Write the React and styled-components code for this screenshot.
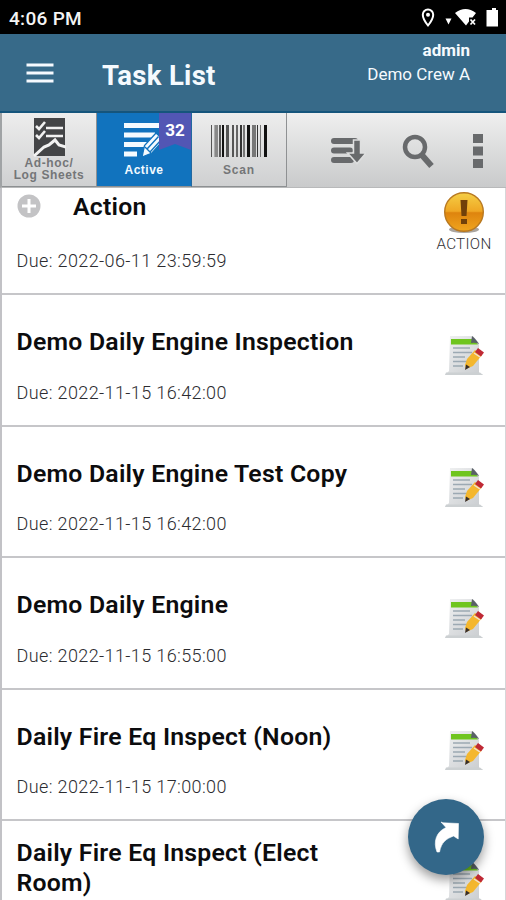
import React from "react";
import styled, { createGlobalStyle } from "styled-components";

const GlobalStyle = createGlobalStyle`
  *, *::before, *::after { box-sizing: border-box; }
  html, body { margin: 0; padding: 0; height: 100%; overflow: hidden; background: #fff; }
  body { font-family: Roboto, "Liberation Sans", sans-serif; color: #0c0c0e; }
  svg { display: block; flex: none; }
`;

const Screen = styled.div`
  width: 506px;
  height: 900px;
  display: flex;
  flex-direction: column;
  overflow: hidden;
  position: relative;
`;

const StatusBar = styled.div`
  height: 34px;
  flex: none;
  display: flex;
  align-items: center;
  justify-content: space-between;
  padding: 2px 7px 0 9px;
  background: #000;
  color: #f4f4f4;
`;

const Clock = styled.span`
  font-size: 19px;
  font-weight: 500;
  line-height: 24px;
  letter-spacing: 0.3px;
  padding-top: 1px;
`;

const Header = styled.header`
  height: 79px;
  flex: none;
  display: flex;
  background: #376a89;
  border-bottom: 2px solid #15557c;
  color: #f5fafe;
  padding: 0 36px 0 26px;
`;

const MenuButton = styled.div`
  display: flex;
  align-items: center;
  width: 76px;
`;

const PageTitle = styled.h1`
  margin: 0;
  padding-top: 26px;
  font-size: 27.5px;
  line-height: 32px;
  font-weight: 700;
  letter-spacing: 0.3px;
  flex: 1;
`;

const Account = styled.div`
  text-align: right;
  padding-top: 5px;
  font-size: 17px;
  line-height: 23.5px;
`;

const UserName = styled.div`
  font-weight: 700;
`;

const Toolbar = styled.nav`
  height: 75px;
  flex: none;
  display: flex;
  background: linear-gradient(#efefef, #c9cacb);
  border-bottom: 1px solid #b8b9ba;
  border-left: 2px solid #a0a3a5;
`;

const Tab = styled.div`
  width: 95px;
  position: relative;
  display: flex;
  flex-direction: column;
  align-items: center;
  padding-top: ${(p) => p.$top}px;
  border-right: 1px solid ${(p) => (p.$active ? "#2268a0" : "#8f9193")};
  border-bottom: 1px solid #8d9092;
  background: ${(p) => (p.$active ? "#1173be" : "linear-gradient(#ededed, #cfd0d1)")};
  color: ${(p) => (p.$active ? "#f2faff" : "#747678")};
`;

const TabLabel = styled.div`
  margin-top: ${(p) => p.$gap}px;
  font-family: "Liberation Sans", Arial, sans-serif;
  font-weight: 700;
  font-size: 12px;
  line-height: 11.5px;
  letter-spacing: ${(p) => p.$spacing}px;
  text-align: center;
  white-space: pre;
`;

const Badge = styled.div`
  position: absolute;
  top: 0;
  right: 0;
  width: 32px;
  height: 37px;
  padding-top: 7px;
  background: #5256b4;
  clip-path: polygon(0 0, 100% 0, 100% 100%, 50% 84%, 0 100%);
  color: #fff;
  font-size: 17px;
  line-height: 20px;
  font-weight: 700;
  text-align: center;
`;

const Tools = styled.div`
  flex: 1;
  display: flex;
  align-items: center;
  padding: 2px 0 0 43px;
`;

const ToolSlot = styled.div`
  width: ${(p) => p.$width}px;
  flex: none;
`;

const List = styled.main`
  flex: 1;
  min-height: 0;
  overflow: hidden;
  border-left: 2px solid #c2c2c6;
  border-right: 1px solid #d6d6d8;
`;

const Row = styled.article`
  height: ${(p) => p.$height || 131.5}px;
  display: flex;
  justify-content: space-between;
  padding: ${(p) => p.$top}px 13.5px 0 14.5px;
  border-bottom: 2px solid #c6c6c9;
`;

const TaskTitle = styled.h2`
  margin: 0;
  width: 370px;
  display: flex;
  gap: 32.5px;
  font-size: 24.8px;
  line-height: 29.5px;
  font-weight: 600;
  letter-spacing: 0.24px;
`;

const Due = styled.div`
  margin-top: ${(p) => p.$gap}px;
  font-size: 18px;
  line-height: 22px;
  font-weight: 300;
  letter-spacing: 0.38px;
  color: #2c2c30;
`;

const ActionBadge = styled.div`
  display: flex;
  flex-direction: column;
  align-items: center;
  font-size: 15.2px;
  line-height: 18px;
  letter-spacing: 0.3px;
  color: #303034;
  font-weight: 300;
`;

const AlertSlot = styled.div`
  padding-bottom: 1px;
`;

const PlusSlot = styled.span`
  padding-top: 2px;
`;

const IconSlot = styled.div`
  padding: ${(p) => p.$top}px 6px 0 0;
`;

const Fab = styled.div`
  position: absolute;
  left: 408px;
  top: 799px;
  width: 76px;
  height: 76px;
  border-radius: 50%;
  display: grid;
  place-items: center;
  background: #336789;
  box-shadow: 0 5px 11px rgba(0, 0, 0, 0.4);
`;

const StatusIcons = () => (
  <svg width="80" height="24" viewBox="0 0 80 24" fill="#fff">
    <path d="M9 3.5a5.2 5.2 0 0 0-5.2 5.2C3.8 13 9 19.500 9 19.500s5.200-6.500 5.200-10.800A5.200 5.200 0 0 0 9 3.500z" fill="none" stroke="#fff" strokeWidth="2" />
    <circle cx="9" cy="8.700" r="2" />
    <path d="M26.500 12.500h6l-3 6z" />
    <path d="M36 7q10.500-8 21 0l-3.500 4.500H50v4l-3 4z" />
    <path d="m51.500 13.500 4.500 5m0-5-4.500 5" stroke="#fff" strokeWidth="1.700" />
    <path d="M70 4h3V2h4v2h2v16.500H67.500V4z" />
  </svg>
);

const MenuIcon = () => (
  <svg width="28" height="22" viewBox="0 0 28 22" stroke="#f6faff" strokeWidth="3.200">
    <path d="M.5 3h27M.5 11h27M.5 19h27" />
  </svg>
);

const SheetIcon = () => (
  <svg width="33" height="39" viewBox="0 0 33 39">
    <path d="M1 0h31v38H1z" fill="#444547" />
    <g fill="none" stroke="#f2f2f2" strokeWidth="2.600">
      <path d="M13 10h17M13 18h17M3 8l3 3 6-7M3 17l3 3 6-7" />
      <path d="m1 38 10-9 5-2 6-5 4 5 7 2" strokeWidth="3" />
    </g>
  </svg>
);

const ActiveIcon = () => (
  <svg width="40" height="38" viewBox="0 0 40 38">
    <path d="M0 1h38v5H0zM0 10.500h31v5H0zM0 20h23v5H0zM0 29.500h13v5H0z" fill="#f5fbff" />
    <path d="m18 35 2.500-11.500L32 11l7.500 7L28 31z" fill="#f5fbff" stroke="#1173be" strokeWidth="1.300" />
    <path d="m23.500 26.500 11-12m-8 15 11-12M21 25l6 6" stroke="#1173be" strokeWidth="1.400" />
  </svg>
);

const bars = [
  [0, 1, "#555"], [3, 1, "#aaa"], [4, 3, "#888"], [8, 2, "#555"], [11, 2, "#111"],
  [15, 3, "#555"], [21, 2, "#555"], [25, 2, "#666"], [29, 2, "#333"], [32, 2, "#777"],
  [36, 3, "#111"], [41, 4, "#777"], [46, 1, "#333"], [49, 1, "#777"], [53, 3, "#111"],
];

const BarcodeIcon = () => (
  <svg width="57" height="32" viewBox="0 0 57 32">
    {bars.map(([x, w, fill]) => (
      <rect key={x} x={x} width={w} height="32" fill={fill} />
    ))}
  </svg>
);

const SortIcon = () => (
  <svg width="36" height="28" viewBox="0 0 36 28" fill="#686a6c">
    <g stroke="#686a6c" strokeWidth="6" strokeLinecap="round">
      <path d="M4 4h21M4 13.500h16M4 23h17" />
    </g>
    <path d="M23.500 3h7v13H36l-9 10.500L17.500 16h6z" stroke="#dedfdf" strokeWidth="1.500" />
  </svg>
);

const SearchIcon = () => (
  <svg width="33" height="35" viewBox="0 0 33 35" fill="none" stroke="#686a6c">
    <circle cx="13" cy="13" r="10" strokeWidth="4.500" />
    <path d="m19 20 10.500 12" strokeWidth="6" />
  </svg>
);

const MoreIcon = () => (
  <svg width="10" height="34" viewBox="0 0 10 34" fill="#686a6c">
    <path d="M0 0h10v9H0zM0 12.500h10v9H0zM0 25h10v9H0z" />
  </svg>
);

const PlusIcon = () => (
  <svg width="24" height="26" viewBox="0 0 24 26">
    <circle cx="12" cy="12" r="11.500" fill="#c3c3c5" />
    <path d="M12 5v14M5 12h14" stroke="#fff" strokeWidth="3" />
  </svg>
);

const AlertIcon = () => (
  <svg width="42" height="42" viewBox="0 0 42 42">
    <defs>
      <linearGradient id="amber" x2="0" y2="1">
        <stop stopColor="#f5cf46" />
        <stop offset=".48" stopColor="#efa724" />
        <stop offset=".52" stopColor="#de840e" />
        <stop offset="1" stopColor="#f0a51e" />
      </linearGradient>
    </defs>
    <ellipse cx="21" cy="37.500" rx="15" ry="3.500" fill="#aaa5a0" />
    <circle cx="21" cy="20" r="19.300" fill="url(#amber)" stroke="#b87922" strokeWidth="1.400" />
    <path d="M17.500 8h7l-1 16h-5zM18 27h6v5h-6z" fill="#71400a" />
  </svg>
);

const TaskIcon = () => (
  <svg width="42" height="44" viewBox="0 0 42 44">
    <defs>
      <linearGradient id="sheet" x2="1" y2="1">
        <stop stopColor="#f0f1f2" />
        <stop offset="1" stopColor="#c9cccf" />
      </linearGradient>
    </defs>
    <path d="M6 2h23l6 7v30l4 2H1l4-4z" fill="url(#sheet)" />
    <path d="M2 38.500h34l3 2.500H1z" fill="#ccd0d2" />
    <path d="M7 5h22l5 5.500H7z" fill="#6fc51f" />
    <path d="M28 2q3 2 7 8-4-2-8-1z" fill="#596067" />
    <path d="M9 14h17M9 18.500h19M9 23h12M9 27.500h14M9 32h10" stroke="#9ca9b3" strokeWidth="1.400" />
    <path d="m21 31 2-6 8-9 7 5-9 11-7 3z" fill="#f4b72e" />
    <path d="m31 18 3-4 6 4.500-3 4z" fill="#bf2935" />
    <path d="m22 30.500 4 2.500-5 3z" fill="#382e2b" />
    <path d="m30 19 6 4" stroke="#f2dfcf" strokeWidth="1.500" />
  </svg>
);

const ShareArrow = () => (
  <svg width="28" height="34" viewBox="0 0 28 34">
    <path d="m9 2 2 .8 15.500.7-.3 15.500-4.700-3C14 19 9.500 22 7.500 32H5C1 22 4 12 14 7.500z" fill="#fff" stroke="#fff" strokeWidth=".6" />
  </svg>
);

const tasks = [
  { name: "Demo Daily Engine Inspection", due: "2022-11-15 16:42:00" },
  { name: "Demo Daily Engine Test Copy", due: "2022-11-15 16:42:00" },
  { name: "Demo Daily Engine", due: "2022-11-15 16:55:00" },
  { name: "Daily Fire Eq Inspect (Noon)", due: "2022-11-15 17:00:00" },
];

export default function App() {
  return (
    <Screen>
      <GlobalStyle />
      <StatusBar>
        <Clock>4:06 PM</Clock>
        <StatusIcons />
      </StatusBar>
      <Header>
        <MenuButton><MenuIcon /></MenuButton>
        <PageTitle>Task List</PageTitle>
        <Account>
          <UserName>admin</UserName>
          <div>Demo Crew A</div>
        </Account>
      </Header>
      <Toolbar>
        <Tab $top={5}>
          <SheetIcon />
          <TabLabel $gap={1} $spacing={0.6}>{"Ad-hoc/\nLog Sheets"}</TabLabel>
        </Tab>
        <Tab $active $top={9}>
          <ActiveIcon />
          <TabLabel $gap={5} $spacing={0.5}>Active</TabLabel>
          <Badge>32</Badge>
        </Tab>
        <Tab $top={12}>
          <BarcodeIcon />
          <TabLabel $gap={8} $spacing={0.8}>Scan</TabLabel>
        </Tab>
        <Tools>
          <ToolSlot $width={72}><SortIcon /></ToolSlot>
          <ToolSlot $width={71}><SearchIcon /></ToolSlot>
          <ToolSlot $width={10}><MoreIcon /></ToolSlot>
        </Tools>
      </Toolbar>
      <List>
        <Row $height={107} $top={4}>
          <div>
            <TaskTitle><PlusSlot><PlusIcon /></PlusSlot>Action</TaskTitle>
            <Due $gap={28}>Due: 2022-06-11 23:59:59</Due>
          </div>
          <ActionBadge><AlertSlot><AlertIcon /></AlertSlot>ACTION</ActionBadge>
        </Row>
        {tasks.map((task) => (
          <Row key={task.name} $top={32}>
            <div>
              <TaskTitle>{task.name}</TaskTitle>
              <Due $gap={25}>Due: {task.due}</Due>
            </div>
            <IconSlot $top={7}><TaskIcon /></IconSlot>
          </Row>
        ))}
        <Row $top={17}>
          <TaskTitle>Daily Fire Eq Inspect (Elect Room)</TaskTitle>
          <IconSlot $top={22}><TaskIcon /></IconSlot>
        </Row>
      </List>
      <Fab><ShareArrow /></Fab>
    </Screen>
  );
}
